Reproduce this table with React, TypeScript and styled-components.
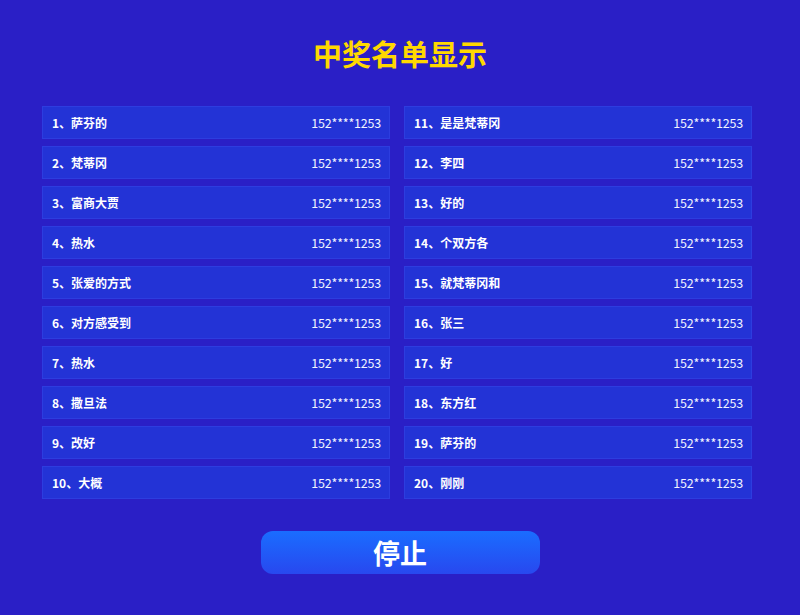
import React from "react";
import styled, { createGlobalStyle } from "styled-components";

const Global = createGlobalStyle`
  html, body { margin: 0; padding: 0; background: #2a1fc6; }
  body { font-family: "Noto Sans CJK SC", "Noto Sans", sans-serif; }
`;

const Page = styled.div`
  width: 800px;
  height: 615px;
  box-sizing: border-box;
  padding: 32px 48px 0 42px;
  display: flex;
  flex-direction: column;
  align-items: stretch;
`;

const Title = styled.h1`
  margin: 0;
  height: 42px;
  line-height: 42px;
  text-align: center;
  font-size: 29px;
  font-weight: 700;
  color: #ffd800;
  padding-left: 6px;
`;

const Grid = styled.div`
  margin-top: 32px;
  display: grid;
  grid-template-columns: 348px 348px;
  grid-template-rows: repeat(10, 33px);
  grid-auto-flow: column;
  column-gap: 14px;
  row-gap: 7px;
`;

const Row = styled.div`
  box-sizing: border-box;
  border: 1px solid rgba(80, 100, 255, 0.22);
  background: #2333d6;
  display: flex;
  align-items: center;
  justify-content: space-between;
  padding: 0 8px 0 9px;
  color: #ffffff;
  font-size: 12px;
`;

const Name = styled.span`
  font-weight: 700;
`;

const Phone = styled.span`
  font-weight: 400;
  color: #f2f4ff;
  font-size: 12.5px;
  letter-spacing: -0.2px;
`;

const ButtonWrap = styled.div`
  margin-top: 32px;
  display: flex;
  justify-content: center;
  padding-left: 6px;
`;

const StopButton = styled.button`
  width: 279px;
  height: 43px;
  border: none;
  border-radius: 12px;
  background: linear-gradient(180deg, #1a6dff 0%, #2848ef 100%);
  color: #ffffff;
  font-family: "Noto Sans CJK SC", sans-serif;
  font-size: 27px;
  font-weight: 700;
  line-height: 43px;
  padding: 0;
  cursor: pointer;
`;

const names = [
  "萨芬的", "梵蒂冈", "富商大贾", "热水", "张爱的方式", "对方感受到", "热水", "撒旦法", "改好", "大概",
  "是是梵蒂冈", "李四", "好的", "个双方各", "就梵蒂冈和", "张三", "好", "东方红", "萨芬的", "刚刚",
];

export default function App() {
  return (
    <>
      <Global />
      <Page>
        <Title>中奖名单显示</Title>
        <Grid>
          {names.map((n, i) => (
            <Row key={i}>
              <Name>{i + 1}、{n}</Name>
              <Phone>152****1253</Phone>
            </Row>
          ))}
        </Grid>
        <ButtonWrap>
          <StopButton>停止</StopButton>
        </ButtonWrap>
      </Page>
    </>
  );
}
